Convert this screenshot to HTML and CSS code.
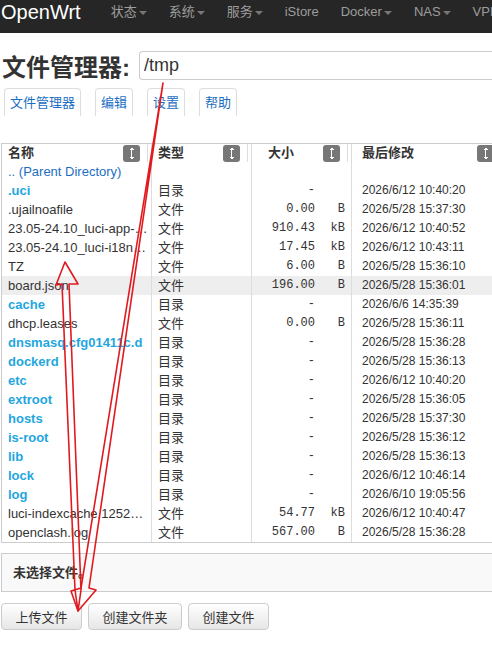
FILE: index.html
```html
<!DOCTYPE html>
<html lang="zh-CN">
<head>
    <meta charset="UTF-8">
    <meta name="viewport" content="width=device-width, initial-scale=1.0">
    <title>文件管理器 - OpenWrt</title>
    <link rel="stylesheet" href="styles.css">
</head>
<body>
    <header class="navbar">
        <a class="brand">OpenWrt</a>
        <ul class="nav">
            <li>状态<b class="caret"></b></li>
            <li>系统<b class="caret"></b></li>
            <li>服务<b class="caret"></b></li>
            <li>iStore</li>
            <li>Docker<b class="caret"></b></li>
            <li>NAS<b class="caret"></b></li>
            <li>VPN<b class="caret"></b></li>
        </ul>
    </header>

    <main class="page">
        <div class="title-row">
            <h2>文件管理器:</h2>
            <input class="path" type="text" value="/tmp">
        </div>

        <ul class="tabs">
            <li>文件管理器</li>
            <li>编辑</li>
            <li>设置</li>
            <li>帮助</li>
        </ul>

        <div class="listing">
            <div class="row head">
                <div class="cell">名称<span class="sort"></span></div>
                <div class="cell">类型<span class="sort"></span></div>
                <div class="cell size-head">大小<span class="sort"></span></div>
                <div class="cell">最后修改<span class="sort"></span></div>
            </div>
            <div class="row">
                <div class="cell name"><a class="parent">.. (Parent Directory)</a></div>
                <div class="cell"></div>
                <div class="cell"></div>
                <div class="cell"></div>
            </div>
        </div>

        <div class="upload-box">未选择文件。</div>

        <div class="actions">
            <button type="button">上传文件</button>
            <button type="button">创建文件夹</button>
            <button type="button">创建文件</button>
        </div>
    </main>

    <!-- red pen marks on top of the page -->
    <svg class="marks" width="492" height="645" viewBox="0 0 492 645">
        <polygon points="163,83 89,588 96,590 78,611 71,591 81,588"/>
        <polygon points="65,262 78,284 69,284 81,590 78,611 75,590 62,284 56,285"/>
    </svg>

    <script>
        // directory listing of /tmp
        const entries = [
            { name: ".uci", dir: true, time: "2026/6/12 10:40:20" },
            { name: ".ujailnoafile", size: "0.00", unit: "B", time: "2026/5/28 15:37:30" },
            { name: "23.05-24.10_luci-app-adguardhome.ipk", size: "910.43", unit: "kB", time: "2026/6/12 10:40:52" },
            { name: "23.05-24.10_luci-i18n-adguardhome.ipk", size: "17.45", unit: "kB", time: "2026/6/12 10:43:11" },
            { name: "TZ", size: "6.00", unit: "B", time: "2026/5/28 15:36:10" },
            { name: "board.json", size: "196.00", unit: "B", time: "2026/5/28 15:36:01", hover: true },
            { name: "cache", dir: true, time: "2026/6/6 14:35:39" },
            { name: "dhcp.leases", size: "0.00", unit: "B", time: "2026/5/28 15:36:11" },
            { name: "dnsmasq.cfg01411c.d", dir: true, time: "2026/5/28 15:36:28" },
            { name: "dockerd", dir: true, time: "2026/5/28 15:36:13" },
            { name: "etc", dir: true, time: "2026/6/12 10:40:20" },
            { name: "extroot", dir: true, time: "2026/5/28 15:36:05" },
            { name: "hosts", dir: true, time: "2026/5/28 15:37:30" },
            { name: "is-root", dir: true, time: "2026/5/28 15:36:12" },
            { name: "lib", dir: true, time: "2026/5/28 15:36:13" },
            { name: "lock", dir: true, time: "2026/6/12 10:46:14" },
            { name: "log", dir: true, time: "2026/6/10 19:05:56" },
            { name: "luci-indexcache.1252c0a4.json", size: "54.77", unit: "kB", time: "2026/6/12 10:40:47" },
            { name: "openclash.log", size: "567.00", unit: "B", time: "2026/5/28 15:36:28" },
        ];

        const listing = document.querySelector(".listing");
        entries.forEach(e => {
            const row = document.createElement("div");
            row.className = "row" + (e.hover ? " hover" : "");
            row.innerHTML = `
                <div class="cell name${e.dir ? " dir" : ""}">${e.name}</div>
                <div class="cell">${e.dir ? "目录" : "文件"}</div>
                <div class="cell size"><span class="num">${e.dir ? "-" : e.size}</span><span class="unit">${e.dir ? "" : e.unit}</span></div>
                <div class="cell time">${e.time}</div>
            `;
            listing.appendChild(row);
        });
    </script>
</body>
</html>
```
FILE: styles.css
```css
body {
    margin: 0;
    width: 492px;
    height: 645px;
    overflow: hidden;
    position: relative;
    font-family: "Liberation Sans", "Noto Sans CJK SC", sans-serif;
    font-size: 13px;
    color: #333;
    background: #fff;
}
ul {
    list-style: none;
    margin: 0;
    padding: 0;
}

/* top bar */
.navbar {
    height: 33px;
    background: #262626;
    display: flex;
    align-items: flex-start;
    white-space: nowrap;
    overflow: hidden;
}
.brand {
    font-size: 20px;
    line-height: 24px;
    color: #fff;
    padding-left: 1px;
}
.nav {
    display: flex;
    margin-left: 19px;
}
.nav li {
    line-height: 24px;
    padding: 0 11px;
    color: #9d9d9d;
}
.caret {
    display: inline-block;
    margin-left: 2px;
    vertical-align: middle;
    border-top: 4px solid #777;
    border-left: 4px solid transparent;
    border-right: 4px solid transparent;
}

.page {
    padding-left: 1px;
}

/* heading with path */
.title-row {
    display: flex;
    align-items: center;
    margin-top: 18px;
    height: 29px;
}
.title-row h2 {
    margin: 0;
    padding-left: 1px;
    font-size: 24px;
    color: #333;
}
.path {
    flex: 1;
    margin-left: 9px;
    height: 29px;
    box-sizing: border-box;
    border: 1px solid #ccc;
    border-right: none;
    border-radius: 4px 0 0 4px;
    padding: 0 4px;
    font-family: "Liberation Sans", sans-serif;
    font-size: 18px;
    color: #333;
}

/* tabs */
.tabs {
    display: flex;
    gap: 14px;
    margin: 8px 0 0 3px;
}
.tabs li {
    height: 28px;
    line-height: 27px;
    box-sizing: border-box;
    padding: 0 5px;
    border: 1px solid #ddd;
    border-bottom: none;
    border-radius: 4px 4px 0 0;
    color: #1b6ec2;
}

/* file table */
.listing {
    margin-top: 27px;
    width: 496px;
    border: 1px solid #ccc;
    border-right: none;
}
.row {
    display: grid;
    grid-template-columns: 150px 100px 100px 1fr;
    height: 19px;
    line-height: 19px;
}
.row.hover {
    background: #eee;
}
.cell {
    box-sizing: border-box;
    border-right: 1px solid #ddd;
    padding-left: 6px;
    white-space: nowrap;
    overflow: hidden;
    text-overflow: ellipsis;
}
.cell.name {
    padding-right: 3px;
}
.cell:last-child {
    border-right: none;
    padding-left: 10px;
}
.row.head {
    height: 18px;
    line-height: 18px;
    font-weight: bold;
}
.row.head .cell {
    display: flex;
    align-items: center;
    justify-content: space-between;
    padding-right: 11px;
    box-shadow: inset -3px 0 0 #fff, inset -4px 0 0 #ddd;
}
.row.head .cell:last-child {
    padding-right: 4px;
    box-shadow: none;
}
.row.head .size-head {
    padding-left: 16px;
}
.sort {
    width: 17px;
    height: 17px;
    border-radius: 3px;
    background: #777;
    position: relative;
}
.sort::before {
    content: "";
    position: absolute;
    left: 8px;
    top: 4px;
    width: 1px;
    height: 9px;
    background: #fff;
}
.sort::after {
    content: "";
    position: absolute;
    left: 6px;
    top: 3px;
    width: 5px;
    height: 11px;
    background:
        linear-gradient(to bottom right, transparent 49%, #fff 50%) 0 0 / 3px 2px no-repeat,
        linear-gradient(to bottom left, transparent 49%, #fff 50%) 3px 0 / 2px 2px no-repeat,
        linear-gradient(to top right, transparent 49%, #fff 50%) 0 9px / 3px 2px no-repeat,
        linear-gradient(to top left, transparent 49%, #fff 50%) 3px 9px / 2px 2px no-repeat;
}
.parent {
    color: #1b6ec2;
}
.name.dir {
    color: #1fa6e0;
    font-weight: bold;
}
.size {
    font-family: "Liberation Mono", monospace;
    font-size: 12px;
    padding-left: 0;
}
.size .num {
    display: inline-block;
    width: 63px;
    text-align: right;
}
.size .unit {
    display: inline-block;
    width: 30px;
    text-align: right;
}
.time {
    font-size: 12px;
}

/* upload area */
.upload-box {
    margin-top: 10px;
    width: 496px;
    height: 39px;
    line-height: 37px;
    box-sizing: border-box;
    border: 1px solid #ccc;
    border-right: none;
    background: #f9f9f9;
    padding-left: 11px;
    font-weight: bold;
}
.actions {
    display: flex;
    gap: 6px;
    margin-top: 11px;
}
.actions button {
    height: 27px;
    padding: 0 13.5px;
    border: 1px solid #ccc;
    border-radius: 4px;
    background: linear-gradient(#fff, #e6e6e6);
    font-family: "Liberation Sans", "Noto Sans CJK SC", sans-serif;
    font-size: 13px;
    color: #333;
}

.marks {
    position: absolute;
    left: 0;
    top: 0;
    pointer-events: none;
}
.marks polygon {
    fill: none;
    stroke: #e11a1f;
    stroke-width: 1.6;
    stroke-linejoin: round;
}
```
